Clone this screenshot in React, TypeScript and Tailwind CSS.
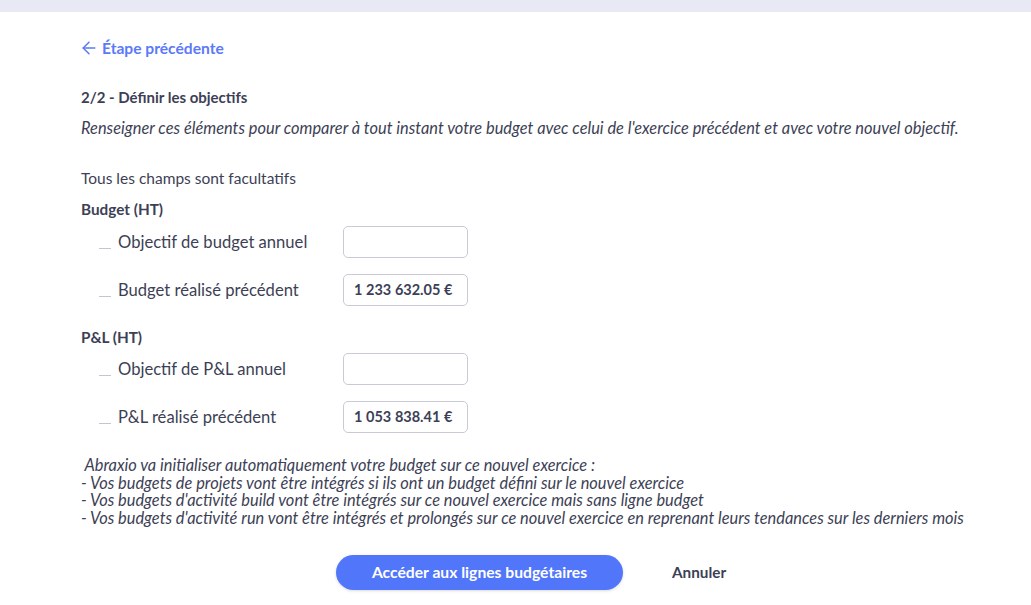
import { ArrowLeft } from "lucide-react";

const font = { fontFamily: "Lato, 'Noto Sans', sans-serif" };

function Field({ label, value }: { label: string; value?: string }) {
  return (
    <div className="flex h-[32px] items-center">
      <span className="mr-[7px] ml-[18px] mt-[12px] h-px w-[12px] bg-[#c4c5d2]" />
      <span className="w-[225px] text-[16.6px] leading-[20px] text-[#3d3f56]">{label}</span>
      <div className="flex h-[32px] w-[125px] items-center rounded-[5px] border border-[#c9cad6] px-[10px] text-[14.5px] font-bold text-[#3d3f56]">
        {value}
      </div>
    </div>
  );
}

export default function App() {
  return (
    <div className="min-h-[605px] bg-white text-[#3d3f56]" style={font}>
      <div className="h-[12px] bg-[#e8e9f5]" />
      <div className="pl-[81px] pr-[20px]">
        <a className="-ml-[2px] mt-[26px] flex items-center gap-[3px] text-[15.6px] leading-[20px] font-bold text-[#5b79f8]">
          <ArrowLeft className="h-[20px] w-[20px]" strokeWidth={1.8} />
          Étape précédente
        </a>
        <p className="mt-[29px] text-[15px] leading-[20px] font-bold">2/2 - Définir les objectifs</p>
        <p className="mt-[11px] text-[16.4px] leading-[20px] italic">
          Renseigner ces éléments pour comparer à tout instant votre budget avec celui de l'exercice précédent et avec votre nouvel objectif.
        </p>
        <p className="mt-[30px] text-[15.5px] leading-[20px]">Tous les champs sont facultatifs</p>
        <p className="mt-[11px] text-[15.3px] leading-[20px] font-bold">Budget (HT)</p>
        <div className="mt-[7px] flex flex-col gap-[16px]">
          <Field label="Objectif de budget annuel" />
          <Field label="Budget réalisé précédent" value={"1\u202F233\u202F632.05\u00A0€"} />
        </div>
        <p className="mt-[21px] text-[15.3px] leading-[20px] font-bold">P&amp;L (HT)</p>
        <div className="mt-[6px] flex flex-col gap-[16px]">
          <Field label="Objectif de P&L annuel" />
          <Field label="P&L réalisé précédent" value={"1\u202F053\u202F838.41\u00A0€"} />
        </div>
        <div className="mt-[23px] text-[16.4px] leading-[17.5px] italic">
          <p>&nbsp;Abraxio va initialiser automatiquement votre budget sur ce nouvel exercice :</p>
          <p>- Vos budgets de projets vont être intégrés si ils ont un budget défini sur le nouvel exercice</p>
          <p>- Vos budgets d'activité build vont être intégrés sur ce nouvel exercice mais sans ligne budget</p>
          <p>- Vos budgets d'activité run vont être intégrés et prolongés sur ce nouvel exercice en reprenant leurs tendances sur les derniers mois</p>
        </div>
        <div className="mt-[29px] flex items-center pl-[255px]">
          <button className="h-[35px] w-[287px] rounded-full bg-[#5176fa] text-[15.7px] font-bold text-white shadow-[0_1px_3px_rgba(0,0,0,0.15)]">
            Accéder aux lignes budgétaires
          </button>
          <button className="ml-[49px] text-[15.3px] font-bold text-[#3d3f56]">Annuler</button>
        </div>
      </div>
    </div>
  );
}
